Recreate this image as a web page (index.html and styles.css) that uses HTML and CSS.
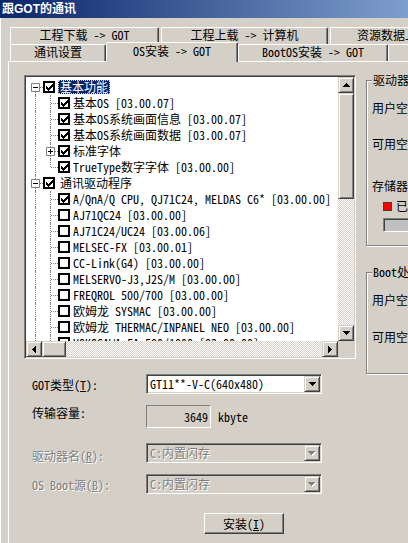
FILE: index.html
```html
<!DOCTYPE html>
<html lang="zh-CN">
<head>
<meta charset="UTF-8">
<link rel="stylesheet" href="styles.css">
<title>跟GOT的通讯</title>
</head>
<body>
<div class="window">
  <div class="titlebar">跟GOT的通讯</div>

  <div class="client">
  <div class="tabs">
    <div class="tab-row">
      <div class="tab t-down">工程下载 -&gt; GOT</div>
      <div class="tab t-up">工程上载 -&gt; 计算机</div>
      <div class="tab t-res">资源数据上载 -&gt; 计算机</div>
    </div>
    <div class="tab-row front">
      <div class="tab t-comm">通讯设置</div>
      <div class="tab t-os active">OS安装 -&gt; GOT</div>
      <div class="tab t-boot">BootOS安装 -&gt; GOT</div>
      <div class="tab t-info">OS信息</div>
    </div>
  </div>

  <div class="panel">
    <div class="main">
      <div class="listbox">
        <div class="list-body">
          <div class="tree">
            <div class="node root"><span class="gut r"><svg class="exp" width="9" height="9"><path d="M0.5 0.5h8v8h-8z" fill="#fff" stroke="#808080"/><path d="M2 4h5v1H2z"/></svg></span><span class="chk"><svg width="7" height="7"><path d="M0 2h1v3H0zM1 3h1v3H1zM2 4h1v3H2zM3 3h1v3H3zM4 2h1v3H4zM5 1h1v3H5zM6 0h1v3H6z"/></svg></span><span class="lbl sel">基本功能</span></div>
            <div class="node"><span class="gut v"></span><span class="gut t"></span><span class="chk"><svg width="7" height="7"><path d="M0 2h1v3H0zM1 3h1v3H1zM2 4h1v3H2zM3 3h1v3H3zM4 2h1v3H4zM5 1h1v3H5zM6 0h1v3H6z"/></svg></span><span class="lbl">基本OS [03.00.07]</span></div>
            <div class="node"><span class="gut v"></span><span class="gut t"></span><span class="chk"><svg width="7" height="7"><path d="M0 2h1v3H0zM1 3h1v3H1zM2 4h1v3H2zM3 3h1v3H3zM4 2h1v3H4zM5 1h1v3H5zM6 0h1v3H6z"/></svg></span><span class="lbl">基本OS系统画面信息 [03.00.07]</span></div>
            <div class="node"><span class="gut v"></span><span class="gut t"></span><span class="chk"><svg width="7" height="7"><path d="M0 2h1v3H0zM1 3h1v3H1zM2 4h1v3H2zM3 3h1v3H3zM4 2h1v3H4zM5 1h1v3H5zM6 0h1v3H6z"/></svg></span><span class="lbl">基本OS系统画面数据 [03.00.07]</span></div>
            <div class="node"><span class="gut v"></span><span class="gut t"><svg class="exp" width="9" height="9"><path d="M0.5 0.5h8v8h-8z" fill="#fff" stroke="#808080"/><path d="M2 4h5v1H2zM4 2h1v5H4z"/></svg></span><span class="chk"><svg width="7" height="7"><path d="M0 2h1v3H0zM1 3h1v3H1zM2 4h1v3H2zM3 3h1v3H3zM4 2h1v3H4zM5 1h1v3H5zM6 0h1v3H6z"/></svg></span><span class="lbl">标准字体</span></div>
            <div class="node"><span class="gut v"></span><span class="gut l"></span><span class="chk"><svg width="7" height="7"><path d="M0 2h1v3H0zM1 3h1v3H1zM2 4h1v3H2zM3 3h1v3H3zM4 2h1v3H4zM5 1h1v3H5zM6 0h1v3H6z"/></svg></span><span class="lbl">TrueType数字字体 [03.00.00]</span></div>
            <div class="node root"><span class="gut t"><svg class="exp" width="9" height="9"><path d="M0.5 0.5h8v8h-8z" fill="#fff" stroke="#808080"/><path d="M2 4h5v1H2z"/></svg></span><span class="chk"><svg width="7" height="7"><path d="M0 2h1v3H0zM1 3h1v3H1zM2 4h1v3H2zM3 3h1v3H3zM4 2h1v3H4zM5 1h1v3H5zM6 0h1v3H6z"/></svg></span><span class="lbl">通讯驱动程序</span></div>
            <div class="node"><span class="gut v"></span><span class="gut t"></span><span class="chk"><svg width="7" height="7"><path d="M0 2h1v3H0zM1 3h1v3H1zM2 4h1v3H2zM3 3h1v3H3zM4 2h1v3H4zM5 1h1v3H5zM6 0h1v3H6z"/></svg></span><span class="lbl">A/QnA/Q CPU, QJ71C24, MELDAS C6* [03.00.00]</span></div>
            <div class="node"><span class="gut v"></span><span class="gut t"></span><span class="chk"></span><span class="lbl">AJ71QC24 [03.00.00]</span></div>
            <div class="node"><span class="gut v"></span><span class="gut t"></span><span class="chk"></span><span class="lbl">AJ71C24/UC24 [03.00.06]</span></div>
            <div class="node"><span class="gut v"></span><span class="gut t"></span><span class="chk"></span><span class="lbl">MELSEC-FX [03.00.01]</span></div>
            <div class="node"><span class="gut v"></span><span class="gut t"></span><span class="chk"></span><span class="lbl">CC-Link(G4) [03.00.00]</span></div>
            <div class="node"><span class="gut v"></span><span class="gut t"></span><span class="chk"></span><span class="lbl">MELSERVO-J3,J2S/M [03.00.00]</span></div>
            <div class="node"><span class="gut v"></span><span class="gut t"></span><span class="chk"></span><span class="lbl">FREQROL 500/700 [03.00.00]</span></div>
            <div class="node"><span class="gut v"></span><span class="gut t"></span><span class="chk"></span><span class="lbl">欧姆龙 SYSMAC [03.00.00]</span></div>
            <div class="node"><span class="gut v"></span><span class="gut t"></span><span class="chk"></span><span class="lbl">欧姆龙 THERMAC/INPANEL NEO [03.00.00]</span></div>
            <div class="node"><span class="gut v"></span><span class="gut t"></span><span class="chk"></span><span class="lbl">YOKOGAWA FA-500/1000 [03.00.00]</span></div>
          </div>
          <div class="vscroll">
            <div class="sbtn"><svg width="7" height="4"><path d="M3 0h1v1H3zM2 1h3v1H2zM1 2h5v1H1zM0 3h7v1H0z"/></svg></div>
            <div class="thumb v"></div>
            <div class="track"></div>
            <div class="sbtn"><svg width="7" height="4"><path d="M0 0h7v1H0zM1 1h5v1H1zM2 2h3v1H2zM3 3h1v1H3z"/></svg></div>
          </div>
        </div>
        <div class="hscroll-row">
          <div class="hscroll">
            <div class="sbtn"><svg width="4" height="7"><path d="M0 3h1v1H0zM1 2h1v3H1zM2 1h1v5H2zM3 0h1v7H3z"/></svg></div>
            <div class="thumb h"></div>
            <div class="track"></div>
            <div class="sbtn"><svg width="4" height="7"><path d="M0 0h1v7H0zM1 1h1v5H1zM2 2h1v3H2zM3 3h1v1H3z"/></svg></div>
          </div>
          <div class="corner"></div>
        </div>
      </div>

      <div class="form">
        <div class="frow r1">
          <span class="flabel">GOT类型(<u>T</u>):</span>
          <div class="combo"><span class="combo-text">GT11**-V-C(640x480)</span><span class="combo-btn"><svg width="7" height="4"><path d="M0 0h7v1H0zM1 1h5v1H1zM2 2h3v1H2zM3 3h1v1H3z"/></svg></span></div>
        </div>
        <div class="frow r2">
          <span class="flabel">传输容量:</span>
          <div class="static">3649</div>
          <span class="unit">kbyte</span>
        </div>
        <div class="frow r3 off">
          <span class="flabel">驱动器名(<u>R</u>):</span>
          <div class="combo"><span class="combo-text">C:内置闪存</span><span class="combo-btn"><svg width="8" height="5"><path d="M1 1h7v1H1zM2 2h5v1H2zM3 3h3v1H3zM4 4h1v1H4z" fill="#fff"/><path d="M0 0h7v1H0zM1 1h5v1H1zM2 2h3v1H2zM3 3h1v1H3z" fill="#808080"/></svg></span></div>
        </div>
        <div class="frow r4 off">
          <span class="flabel">OS Boot源(<u>B</u>):</span>
          <div class="combo"><span class="combo-text">C:内置闪存</span><span class="combo-btn"><svg width="8" height="5"><path d="M1 1h7v1H1zM2 2h5v1H2zM3 3h3v1H3zM4 4h1v1H4z" fill="#fff"/><path d="M0 0h7v1H0zM1 1h5v1H1zM2 2h3v1H2zM3 3h1v1H3z" fill="#808080"/></svg></span></div>
        </div>
        <div class="actions">
          <button class="btn">安装(<u>I</u>)</button>
        </div>
      </div>
    </div>

    <div class="side">
      <div class="group g1">
        <div class="group-title">驱动器信息</div>
        <div class="line l1">用户空间:</div>
        <div class="line l2">可用空间:</div>
        <div class="line l3">存储器使用状况</div>
        <div class="legend"><span class="swatch"></span>已使用</div>
        <div class="meter"></div>
      </div>
      <div class="group g2">
        <div class="group-title">Boot处理信息</div>
        <div class="line l1">用户空间:</div>
        <div class="line l2b">可用空间:</div>
      </div>
    </div>
  </div>
  </div>
</div>
</body>
</html>
```

FILE: styles.css
```css
body {
    margin: 0;
    background: #d4d0c8;
    color: #000;
    font: 12px/14px "Noto Sans Mono CJK SC", "Noto Sans CJK SC", monospace;
    overflow: hidden;
}

.window {
    width: 552px;
    height: 543px;
}

/* title bar */
.titlebar {
    height: 18px;
    padding-left: 2px;
    background: linear-gradient(to right, #0a246a, #a6caf0);
    color: #fff;
    font: bold 12px/18px "Liberation Sans", "Noto Sans CJK SC", sans-serif;
}

.client {
    border-left: 1px solid #fff;
}

/* tabs */
.tabs {
    padding-top: 9px;
}

.tab-row {
    display: flex;
    height: 17px;
}

.tab {
    box-sizing: border-box;
    height: 17px;
    border: 1px solid #fff;
    border-bottom: 0;
    border-right-color: #404040;
    border-radius: 2px 2px 0 0;
    box-shadow: inset -1px 0 #808080;
    background: #d4d0c8;
    text-align: center;
    white-space: nowrap;
    line-height: 14px;
    flex: none;
}

.t-down { margin-left: 9px; width: 149px; }
.t-up { margin-left: 2px; width: 167px; }
.t-res { margin-left: 2px; width: 180px; text-align: left; padding-left: 26px; }

.t-comm { margin-left: 9px; width: 96px; }
.t-os { width: 132px; }
.t-boot { width: 150px; }
.t-info { width: 120px; }

.tab.active {
    height: 20px;
    margin-top: -2px;
    position: relative;
    z-index: 1;
    line-height: 15px;
}

/* tab page */
.panel {
    margin-left: 7px;
    border-top: 1px solid #fff;
    border-left: 1px solid #fff;
    height: 482px;
    padding: 13px 0 0 15px;
    display: flex;
}

/* tree list */
.listbox {
    box-sizing: border-box;
    width: 332px;
    height: 284px;
    border: 1px solid;
    border-color: #808080 #fff #fff #808080;
    box-shadow: inset 1px 1px #404040, inset -1px -1px #d4d0c8;
    padding: 1px;
    display: flex;
    flex-direction: column;
}

.list-body {
    display: flex;
    height: 264px;
}

.tree {
    flex: 1;
    background: #fff;
    overflow: hidden;
    padding: 2px 0 0 2px;
}

.node {
    display: flex;
    align-items: center;
    height: 16px;
    white-space: nowrap;
}

.gut {
    position: relative;
    width: 15px;
    height: 16px;
    flex: none;
}

.gut::before,
.gut::after {
    content: "";
    position: absolute;
}

.gut.v::before,
.gut.t::before {
    left: 7px;
    top: 0;
    bottom: 0;
    border-left: 1px dotted #808080;
}

.gut.l::before {
    left: 7px;
    top: 0;
    height: 8px;
    border-left: 1px dotted #808080;
}

.gut.r::before {
    left: 7px;
    top: 8px;
    bottom: 0;
    border-left: 1px dotted #808080;
}

.gut.t::after,
.gut.l::after,
.gut.r::after {
    left: 8px;
    right: 0;
    top: 8px;
    border-top: 1px dotted #808080;
}

.gut .exp {
    position: absolute;
    left: 3px;
    top: 4px;
    z-index: 1;
}

.chk {
    box-sizing: border-box;
    width: 12px;
    height: 12px;
    border: 2px solid #000;
    background: #fff;
    flex: none;
    display: flex;
    align-items: center;
    justify-content: center;
}

.lbl {
    padding: 0 2px;
    margin-left: 1px;
    line-height: 14px;
    height: 14px;
}

.root .lbl {
    margin-left: 3px;
}

.lbl.sel {
    background: #0a246a;
    color: #fff;
    outline: 1px dotted #e8d890;
    outline-offset: -1px;
}

/* scroll bars */
.vscroll {
    width: 16px;
    display: flex;
    flex-direction: column;
}

.hscroll-row {
    display: flex;
    height: 16px;
}

.hscroll {
    flex: 1;
    display: flex;
}

.sbtn,
.thumb {
    box-sizing: border-box;
    width: 16px;
    height: 16px;
    flex: none;
    border: 1px solid;
    border-color: #d4d0c8 #404040 #404040 #d4d0c8;
    box-shadow: inset 1px 1px #fff, inset -1px -1px #808080;
    background: #d4d0c8;
    display: flex;
    align-items: center;
    justify-content: center;
}

.thumb.v { height: 106px; }
.thumb.h { width: 24px; }

.track {
    flex: 1;
    background: repeating-conic-gradient(#fff 0 25%, #d4d0c8 0 50%) 0 0 / 2px 2px;
}

.corner {
    width: 16px;
    background: #d4d0c8;
}

/* form under the tree */
.form {
    padding-left: 8px;
}

.frow {
    display: flex;
    align-items: flex-start;
    white-space: nowrap;
}

.flabel {
    width: 114px;
    flex: none;
}

.r1 { margin-top: 15px; }
.r1 .flabel { margin-top: 4px; }
.r2 { margin-top: 11px; }
.r2 .flabel { margin-top: 1px; }
.r3 { margin-top: 15px; }
.r3 .flabel { margin-top: 6px; }
.r4 { margin-top: 11px; }
.r4 .flabel { margin-top: 4px; }

.off .flabel,
.off .combo-text {
    color: #808080;
    text-shadow: 1px 1px #fff;
}

.combo {
    box-sizing: border-box;
    width: 176px;
    height: 20px;
    border: 1px solid;
    border-color: #808080 #fff #fff #808080;
    box-shadow: inset 1px 1px #404040, inset -1px -1px #d4d0c8;
    padding: 1px;
    background: #fff;
    display: flex;
}

.off .combo {
    background: #d4d0c8;
}

.combo-text {
    flex: 1;
    padding-left: 2px;
    line-height: 16px;
}

.combo-btn {
    box-sizing: border-box;
    width: 16px;
    height: 16px;
    border: 1px solid;
    border-color: #d4d0c8 #404040 #404040 #d4d0c8;
    box-shadow: inset 1px 1px #fff, inset -1px -1px #808080;
    background: #d4d0c8;
    display: flex;
    align-items: center;
    justify-content: center;
}

.static {
    box-sizing: border-box;
    width: 65px;
    height: 23px;
    border: 1px solid;
    border-color: #808080 #fff #fff #808080;
    text-align: right;
    padding-right: 2px;
    line-height: 21px;
}

.unit {
    margin: 5px 0 0 7px;
}

.actions {
    margin-top: 19px;
    padding-left: 172px;
}

.btn {
    box-sizing: border-box;
    width: 80px;
    height: 21px;
    padding: 0;
    border: 1px solid;
    border-color: #fff #404040 #404040 #fff;
    box-shadow: inset -1px -1px #808080;
    background: #d4d0c8;
    color: #000;
    font: inherit;
    line-height: 18px;
}

/* right hand group boxes */
.side {
    margin-left: 10px;
    width: 190px;
    flex: none;
}

.group {
    box-sizing: border-box;
    border: 1px solid #808080;
    box-shadow: inset 1px 1px #fff, 1px 1px #fff;
    padding-left: 5px;
    white-space: nowrap;
}

.g1 { margin-top: 5px; height: 166px; }
.g2 { margin-top: 26px; height: 102px; }

.group-title {
    display: table;
    margin-top: -8px;
    padding: 0 1px;
    background: #d4d0c8;
}

.line.l1 { margin-top: 14px; }
.line.l2 { margin-top: 22px; }
.line.l2b { margin-top: 23px; }
.line.l3 { margin-top: 28px; }

.legend {
    display: flex;
    align-items: center;
    margin: 6px 0 0 11px;
}

.swatch {
    box-sizing: border-box;
    width: 9px;
    height: 9px;
    border: 1px solid #404040;
    background: #f00;
    margin-right: 4px;
}

.meter {
    box-sizing: border-box;
    margin: 5px 0 0 11px;
    height: 14px;
    border: 1px solid;
    border-color: #808080 #fff #fff #808080;
    box-shadow: inset 1px 1px #404040;
    background: #c0c0c0;
}
```
